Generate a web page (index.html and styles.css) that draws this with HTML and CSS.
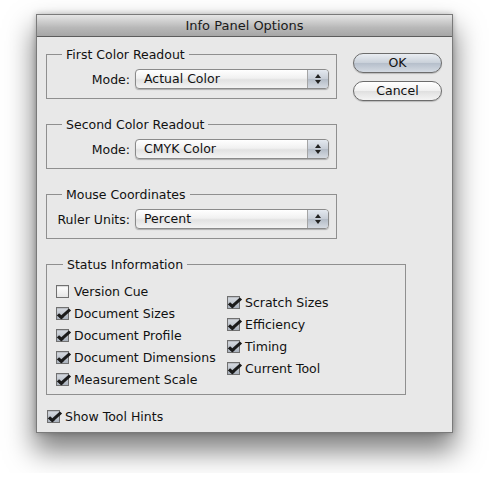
FILE: index.html
```html
<!DOCTYPE html>
<html lang="en">
<head>
<meta charset="UTF-8" />
<title>Info Panel Options</title>
<link rel="stylesheet" href="styles.css">
</head>
<body>

  <div class="dialog">
    <div class="titlebar">Info Panel Options</div>

    <div class="content">
      <div class="groups">

        <fieldset class="group">
          <legend>First Color Readout</legend>
          <div class="row">
            <span class="label">Mode:</span>
            <div class="popup">Actual Color<span class="arrows"></span></div>
          </div>
        </fieldset>

        <fieldset class="group">
          <legend>Second Color Readout</legend>
          <div class="row">
            <span class="label">Mode:</span>
            <div class="popup">CMYK Color<span class="arrows"></span></div>
          </div>
        </fieldset>

        <fieldset class="group">
          <legend>Mouse Coordinates</legend>
          <div class="row">
            <span class="label">Ruler Units:</span>
            <div class="popup">Percent<span class="arrows"></span></div>
          </div>
        </fieldset>

        <fieldset class="group status">
          <legend>Status Information</legend>
          <div class="checks">
            <div class="col">
              <label class="check"><span class="box"></span>Version Cue</label>
              <label class="check"><span class="box on"></span>Document Sizes</label>
              <label class="check"><span class="box on"></span>Document Profile</label>
              <label class="check"><span class="box on"></span>Document Dimensions</label>
              <label class="check"><span class="box on"></span>Measurement Scale</label>
            </div>
            <div class="col right">
              <label class="check"><span class="box on"></span>Scratch Sizes</label>
              <label class="check"><span class="box on"></span>Efficiency</label>
              <label class="check"><span class="box on"></span>Timing</label>
              <label class="check"><span class="box on"></span>Current Tool</label>
            </div>
          </div>
        </fieldset>

        <label class="check hints"><span class="box on"></span>Show Tool Hints</label>
      </div>

      <div class="buttons">
        <div class="btn default">OK</div>
        <div class="btn">Cancel</div>
      </div>
    </div>
  </div>

</body>
</html>
```

FILE: styles.css
```css
html {
  background: #fff;
}
body {
  margin: 0;
  padding: 14px 0 40px 36px;
  font-family: 'DejaVu Sans', sans-serif;
  font-size: 12.5px;
  color: #111;
}
.dialog {
  width: 415px;
  height: 417px;
  background: #e8e8e8;
  border: 1px solid #7a7a7a;
  box-shadow: 0 16px 26px 2px rgba(0, 0, 0, 0.5), 0 0 6px rgba(0, 0, 0, 0.25);
}
.titlebar {
  height: 21px;
  line-height: 21px;
  text-align: center;
  font-size: 13px;
  color: #1a1a1a;
  background: linear-gradient(#e6e6e6, #b8b8b8 60%, #a6a6a6);
  border-bottom: 1px solid #5c5c5c;
}
.content {
  display: flex;
  padding: 10px 0 0 9px;
}
.groups {
  width: 291px;
}
.group {
  margin: 0 0 18px;
  padding: 7px 7px 9px 8px;
  border: 1px solid #8f8f8f;
}
.group legend {
  padding: 0 4px;
  margin-left: 7px;
  line-height: 15px;
}
.row {
  display: flex;
  justify-content: flex-end;
  align-items: center;
  gap: 5px;
}
.label {
  white-space: nowrap;
}
.popup {
  position: relative;
  box-sizing: border-box;
  width: 194px;
  height: 20px;
  line-height: 18px;
  padding-left: 8px;
  border: 1px solid #8a8a8a;
  border-radius: 4px;
  background: linear-gradient(#ffffff, #f1f1f1 45%, #e2e2e2 55%, #f3f3f3);
  box-shadow: 0 1px 1px rgba(0, 0, 0, 0.25);
}
.arrows {
  position: absolute;
  top: 0;
  right: 0;
  width: 20px;
  height: 18px;
  border-left: 1px solid #a5a5a5;
  border-radius: 0 3px 3px 0;
  background: linear-gradient(#e4e9f0, #c7cdd6 50%, #b4bcc7 52%, #d6dbe2);
}
.arrows::before,
.arrows::after {
  content: '';
  position: absolute;
  left: 7px;
  border-left: 3px solid transparent;
  border-right: 3px solid transparent;
}
.arrows::before {
  top: 4px;
  border-bottom: 4px solid #222;
}
.arrows::after {
  top: 10px;
  border-top: 4px solid #222;
}
.status {
  padding: 8px 7px 4px 9px;
  margin-bottom: 10px;
}
.checks {
  display: flex;
}
.col {
  width: 171px;
}
.col.right {
  margin-top: 11px;
}
.check {
  display: flex;
  align-items: center;
  gap: 5px;
  height: 22px;
}
.box {
  width: 11px;
  height: 11px;
  border: 1px solid #707070;
  background: linear-gradient(#ffffff, #e6e6e6);
  box-shadow: inset 0 1px 1px rgba(0, 0, 0, 0.15);
  position: relative;
}
.box.on {
  background: linear-gradient(#d9dde3, #aab2bd);
}
.box.on::after {
  content: '';
  position: absolute;
  left: 3px;
  top: -2px;
  width: 3px;
  height: 10px;
  border: solid #1b1b1b;
  border-width: 0 3px 3px 0;
  transform: rotate(40deg) skewX(-8deg);
  transform-origin: 50% 60%;
}
.hints {
  margin-left: 1px;
}
.buttons {
  display: flex;
  flex-direction: column;
  gap: 8px;
  margin: 6px 0 0 16px;
}
.btn {
  width: 87px;
  height: 18px;
  line-height: 18px;
  text-align: center;
  border: 1px solid #6c6c6c;
  border-radius: 10px;
  background: linear-gradient(#ffffff, #f0f0f0 50%, #e0e0e0 52%, #f4f4f4);
  box-shadow: 0 1px 1px rgba(0, 0, 0, 0.2);
}
.btn.default {
  background: linear-gradient(#e9edf2, #c9d0d9 50%, #b6bfcb 52%, #d4dae2);
}
```
